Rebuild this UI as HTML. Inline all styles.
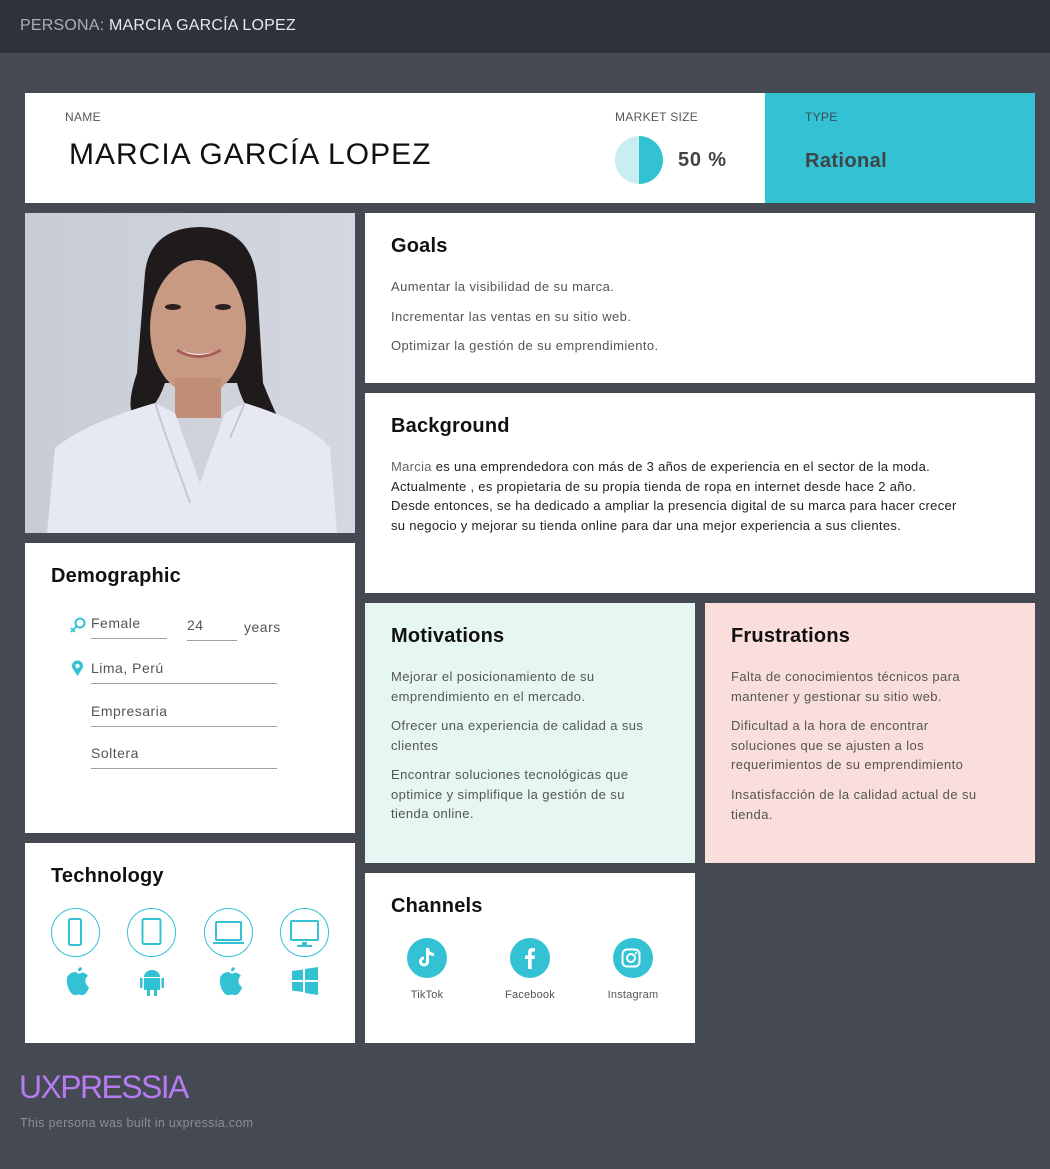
<!DOCTYPE html>
<html><head><meta charset="utf-8">
<style>
*{margin:0;padding:0;box-sizing:border-box}
body{width:1050px;height:1169px;background:#454951;font-family:"Liberation Sans",sans-serif;position:relative;overflow:hidden;color:#333}
.abs{position:absolute}
.card{position:absolute;background:#fff}
h2{position:absolute;font-size:20px;font-weight:bold;color:#111;letter-spacing:0.2px}
.p{position:absolute;font-size:13px;color:#555;letter-spacing:0.4px;line-height:19.6px}
.lbl{position:absolute;font-size:12px;color:#555;letter-spacing:0.3px}
.field{position:absolute;font-size:14px;color:#555;letter-spacing:0.5px;border-bottom:1px solid #9aa3ad;height:24px}
.circ{position:absolute;width:49px;height:49px;border:1px solid #33c1d4;border-radius:50%}
.soc{position:absolute;width:40px;height:40px;border-radius:50%;background:#33c1d4}
.sl{position:absolute;font-size:11px;color:#555;width:80px;text-align:center;letter-spacing:0.2px}
</style></head><body>
<div class="abs" style="left:0;top:0;width:1050px;height:53px;background:#2f323a"></div>
<div class="abs" style="left:20px;top:17px;font-size:16px;color:#aab0b8;letter-spacing:0.2px">PERSONA: <span style="color:#e6e8ea">MARCIA GARCÍA LOPEZ</span></div>

<div class="card" style="left:25px;top:93px;width:740px;height:110px"></div>
<div class="lbl" style="left:65px;top:110px">NAME</div>
<div class="abs" style="left:69px;top:138px;font-size:30px;color:#111;letter-spacing:1px">MARCIA GARCÍA LOPEZ</div>
<div class="lbl" style="left:615px;top:110px">MARKET SIZE</div>
<div class="abs" style="left:615px;top:136px;width:48px;height:48px;border-radius:50%;background:linear-gradient(90deg,#c9eef2 50%,#33c1d4 50%)"></div>
<div class="abs" style="left:678px;top:149px;font-size:20px;font-weight:bold;color:#444;letter-spacing:0.8px">50 %</div>
<div class="abs" style="left:765px;top:93px;width:270px;height:110px;background:#33c1d4"></div>
<div class="lbl" style="left:805px;top:110px;color:#3b4a50">TYPE</div>
<div class="abs" style="left:805px;top:150px;font-size:20px;font-weight:bold;color:#3f4347;letter-spacing:0.4px">Rational</div>

<svg class="abs" style="left:25px;top:213px" width="330" height="320" viewBox="0 0 330 320">
<defs><linearGradient id="bg" x1="0" x2="1"><stop offset="0" stop-color="#c8ccd6"/><stop offset="1" stop-color="#d4d7df"/></linearGradient></defs>
<rect width="330" height="320" fill="url(#bg)"/>
<path d="M120 60 Q125 15 175 14 Q228 15 232 70 L238 170 Q250 200 258 215 L240 215 Q220 200 212 170 L140 170 Q130 200 110 205 Q100 195 112 160 Z" fill="#1f1a1c"/>
<ellipse cx="173" cy="115" rx="48" ry="68" fill="#c99a83"/>
<rect x="150" y="165" width="46" height="40" fill="#c08d77"/>
<path d="M150 135 Q173 150 198 135 Q175 147 150 135" fill="#fff"/>
<path d="M152 137 Q173 150 196 137" stroke="#a85c55" stroke-width="3" fill="none"/>
<ellipse cx="148" cy="94" rx="8" ry="3" fill="#2b1e1c"/><ellipse cx="198" cy="94" rx="8" ry="3" fill="#2b1e1c"/>
<path d="M22 320 L30 235 Q60 210 130 190 L150 200 L175 270 L200 200 L220 190 Q285 210 305 235 L312 320 Z" fill="#e6e8f2"/>
<path d="M130 190 L140 220 L165 290 M220 190 L205 225" stroke="#c5c9d8" stroke-width="2" fill="none"/>
</svg>

<div class="card" style="left:25px;top:543px;width:330px;height:290px"></div>
<h2 style="left:51px;top:565px">Demographic</h2>
<svg class="abs" style="left:69px;top:617px" width="18" height="16" viewBox="0 0 18 16"><circle cx="11" cy="6" r="4.5" fill="none" stroke="#33c1d4" stroke-width="2"/><path d="M7.5 9.5 L2 15 M2 11 L6 15" stroke="#33c1d4" stroke-width="1.8"/></svg>
<div class="field" style="left:91px;top:615px;width:76px">Female</div>
<div class="field" style="left:187px;top:617px;width:50px">24</div>
<div class="abs" style="left:244px;top:619px;font-size:14px;color:#555;letter-spacing:0.5px">years</div>
<svg class="abs" style="left:71px;top:660px" width="13" height="17" viewBox="0 0 13 17"><path d="M6.5 16 L2 9 A5.5 5.5 0 1 1 11 9 Z" fill="#33c1d4"/><circle cx="6.5" cy="6" r="2.2" fill="#fff"/></svg>
<div class="field" style="left:91px;top:660px;width:186px">Lima, Perú</div>
<div class="field" style="left:91px;top:703px;width:186px">Empresaria</div>
<div class="field" style="left:91px;top:745px;width:186px">Soltera</div>

<div class="card" style="left:25px;top:843px;width:330px;height:200px"></div>
<h2 style="left:51px;top:865px">Technology</h2>
<div class="circ" style="left:51px;top:908px"></div>
<div class="circ" style="left:127px;top:908px"></div>
<div class="circ" style="left:204px;top:908px"></div>
<div class="circ" style="left:280px;top:908px"></div>
<svg class="abs" style="left:25px;top:900px" width="330" height="110" viewBox="0 0 330 110">
<g fill="none" stroke="#33c1d4" stroke-width="2">
<rect x="44" y="19" width="12" height="26" rx="1.5"/>
<rect x="117.5" y="19" width="18" height="25" rx="1.5"/>
<rect x="191" y="22" width="25" height="18" rx="1"/>
<rect x="266" y="21" width="27" height="19" rx="1"/>
</g>
<path d="M188 42 H219 V44 H188 Z M277 42 H282 V45 H287 V47 H272 V45 H277 Z" fill="#33c1d4"/>
<path d="M51 72 C44 72 41 77 42 83 C43 90 47 96 51 95 C53 95 54 94 56 95 C60 96 63 91 64 87 C60 85 59 78 63 76 C61 73 58 72 56 73 C54 74 53 74 51 72 Z M53 71 C53 68 55 66 57 68 C57 70 55 72 53 71 Z" fill="#33c1d4"/>
<path d="M204 72 C197 72 194 77 195 83 C196 90 200 96 204 95 C206 95 207 94 209 95 C213 96 216 91 217 87 C213 85 212 78 216 76 C214 73 211 72 209 73 C207 74 206 74 204 72 Z M206 71 C206 68 208 66 210 68 C210 70 208 72 206 71 Z" fill="#33c1d4"/>
<path d="M119 77 A8 7 0 0 1 135 77 Z M119 78 H135 V90 H119 Z M115 78 H117.5 V88 H115 Z M136.5 78 H139 V88 H136.5 Z M122 90 H125 V96 H122 Z M129 90 H132 V96 H129 Z" fill="#33c1d4"/>
<path d="M267 71 L278 69.5 V80 H267 Z M280 69 L293 67 V80 H280 Z M267 82 H278 V92 L267 90.5 Z M280 82 H293 V95 L280 93 Z" fill="#33c1d4"/>
</svg>

<div class="card" style="left:365px;top:213px;width:670px;height:170px"></div>
<h2 style="left:391px;top:235px">Goals</h2>
<div class="p" style="left:391px;top:277px">Aumentar la visibilidad de su marca.</div>
<div class="p" style="left:391px;top:307px">Incrementar las ventas en su sitio web.</div>
<div class="p" style="left:391px;top:336px">Optimizar la gestión de su emprendimiento.</div>

<div class="card" style="left:365px;top:393px;width:670px;height:200px"></div>
<h2 style="left:391px;top:415px">Background</h2>
<div class="p" style="left:391px;top:457px;width:640px;white-space:nowrap;color:#222;letter-spacing:0.3px"><span style="color:#666">Marcia</span> es una emprendedora con más de 3 años de experiencia en el sector de la moda.<br>Actualmente , es propietaria de su propia tienda de ropa en internet desde hace 2 año.<br>Desde entonces, se ha dedicado a ampliar la presencia digital de su marca para hacer crecer<br>su negocio y mejorar su tienda online para dar una mejor experiencia a sus clientes.</div>

<div class="abs" style="left:365px;top:603px;width:330px;height:260px;background:#e5f6f3"></div>
<h2 style="left:391px;top:625px">Motivations</h2>
<div class="p" style="left:391px;top:667px;width:285px">Mejorar el posicionamiento de su<br>emprendimiento en el mercado.</div>
<div class="p" style="left:391px;top:716px;width:285px">Ofrecer una experiencia de calidad a sus<br>clientes</div>
<div class="p" style="left:391px;top:765px;width:285px">Encontrar soluciones tecnológicas que<br>optimice y simplifique la gestión de su<br>tienda online.</div>

<div class="abs" style="left:705px;top:603px;width:330px;height:260px;background:#f9dedb"></div>
<h2 style="left:731px;top:625px">Frustrations</h2>
<div class="p" style="left:731px;top:667px;width:290px">Falta de conocimientos técnicos para<br>mantener y gestionar su sitio web.</div>
<div class="p" style="left:731px;top:716px;width:290px">Dificultad a la hora de encontrar<br>soluciones que se ajusten a los<br>requerimientos de su emprendimiento</div>
<div class="p" style="left:731px;top:785px;width:290px">Insatisfacción de la calidad actual de su<br>tienda.</div>

<div class="card" style="left:365px;top:873px;width:330px;height:170px"></div>
<h2 style="left:391px;top:895px">Channels</h2>
<div class="soc" style="left:407px;top:938px"></div>
<div class="soc" style="left:510px;top:938px"></div>
<div class="soc" style="left:613px;top:938px"></div>
<svg class="abs" style="left:407px;top:938px" width="246" height="40" viewBox="0 0 246 40">
<path d="M19 10 H22 C22 13 24 15 27 15 V18 C25 18 23.5 17.5 22 16.5 V23.5 A5 5 0 1 1 17 18.5 V21.5 A2 2 0 1 0 19 23.5 Z" fill="#fff"/>
<path d="M121 31 V21 H118 V17.5 H121 V14.5 C121 11.5 122.5 10 125.5 10 H128 V13.5 H126.3 C125 13.5 124.7 14 124.7 15 V17.5 H128 L127.5 21 H124.7 V31 Z" fill="#fff"/>
<rect x="215.5" y="11.5" width="17" height="17" rx="4.5" fill="none" stroke="#fff" stroke-width="2"/>
<circle cx="224" cy="20" r="4" fill="none" stroke="#fff" stroke-width="2"/>
<circle cx="229" cy="15" r="1.2" fill="#fff"/>
</svg>
<div class="sl" style="left:387px;top:989px">TikTok</div>
<div class="sl" style="left:490px;top:989px">Facebook</div>
<div class="sl" style="left:593px;top:989px">Instagram</div>

<div class="abs" style="left:19px;top:1069px;font-size:32px;color:#b57bf0;letter-spacing:-1.6px">UXPRESSIA</div>
<div class="abs" style="left:20px;top:1116px;font-size:12.5px;color:#8a8f97;letter-spacing:0.3px">This persona was built in uxpressia.com</div>
</body></html>
